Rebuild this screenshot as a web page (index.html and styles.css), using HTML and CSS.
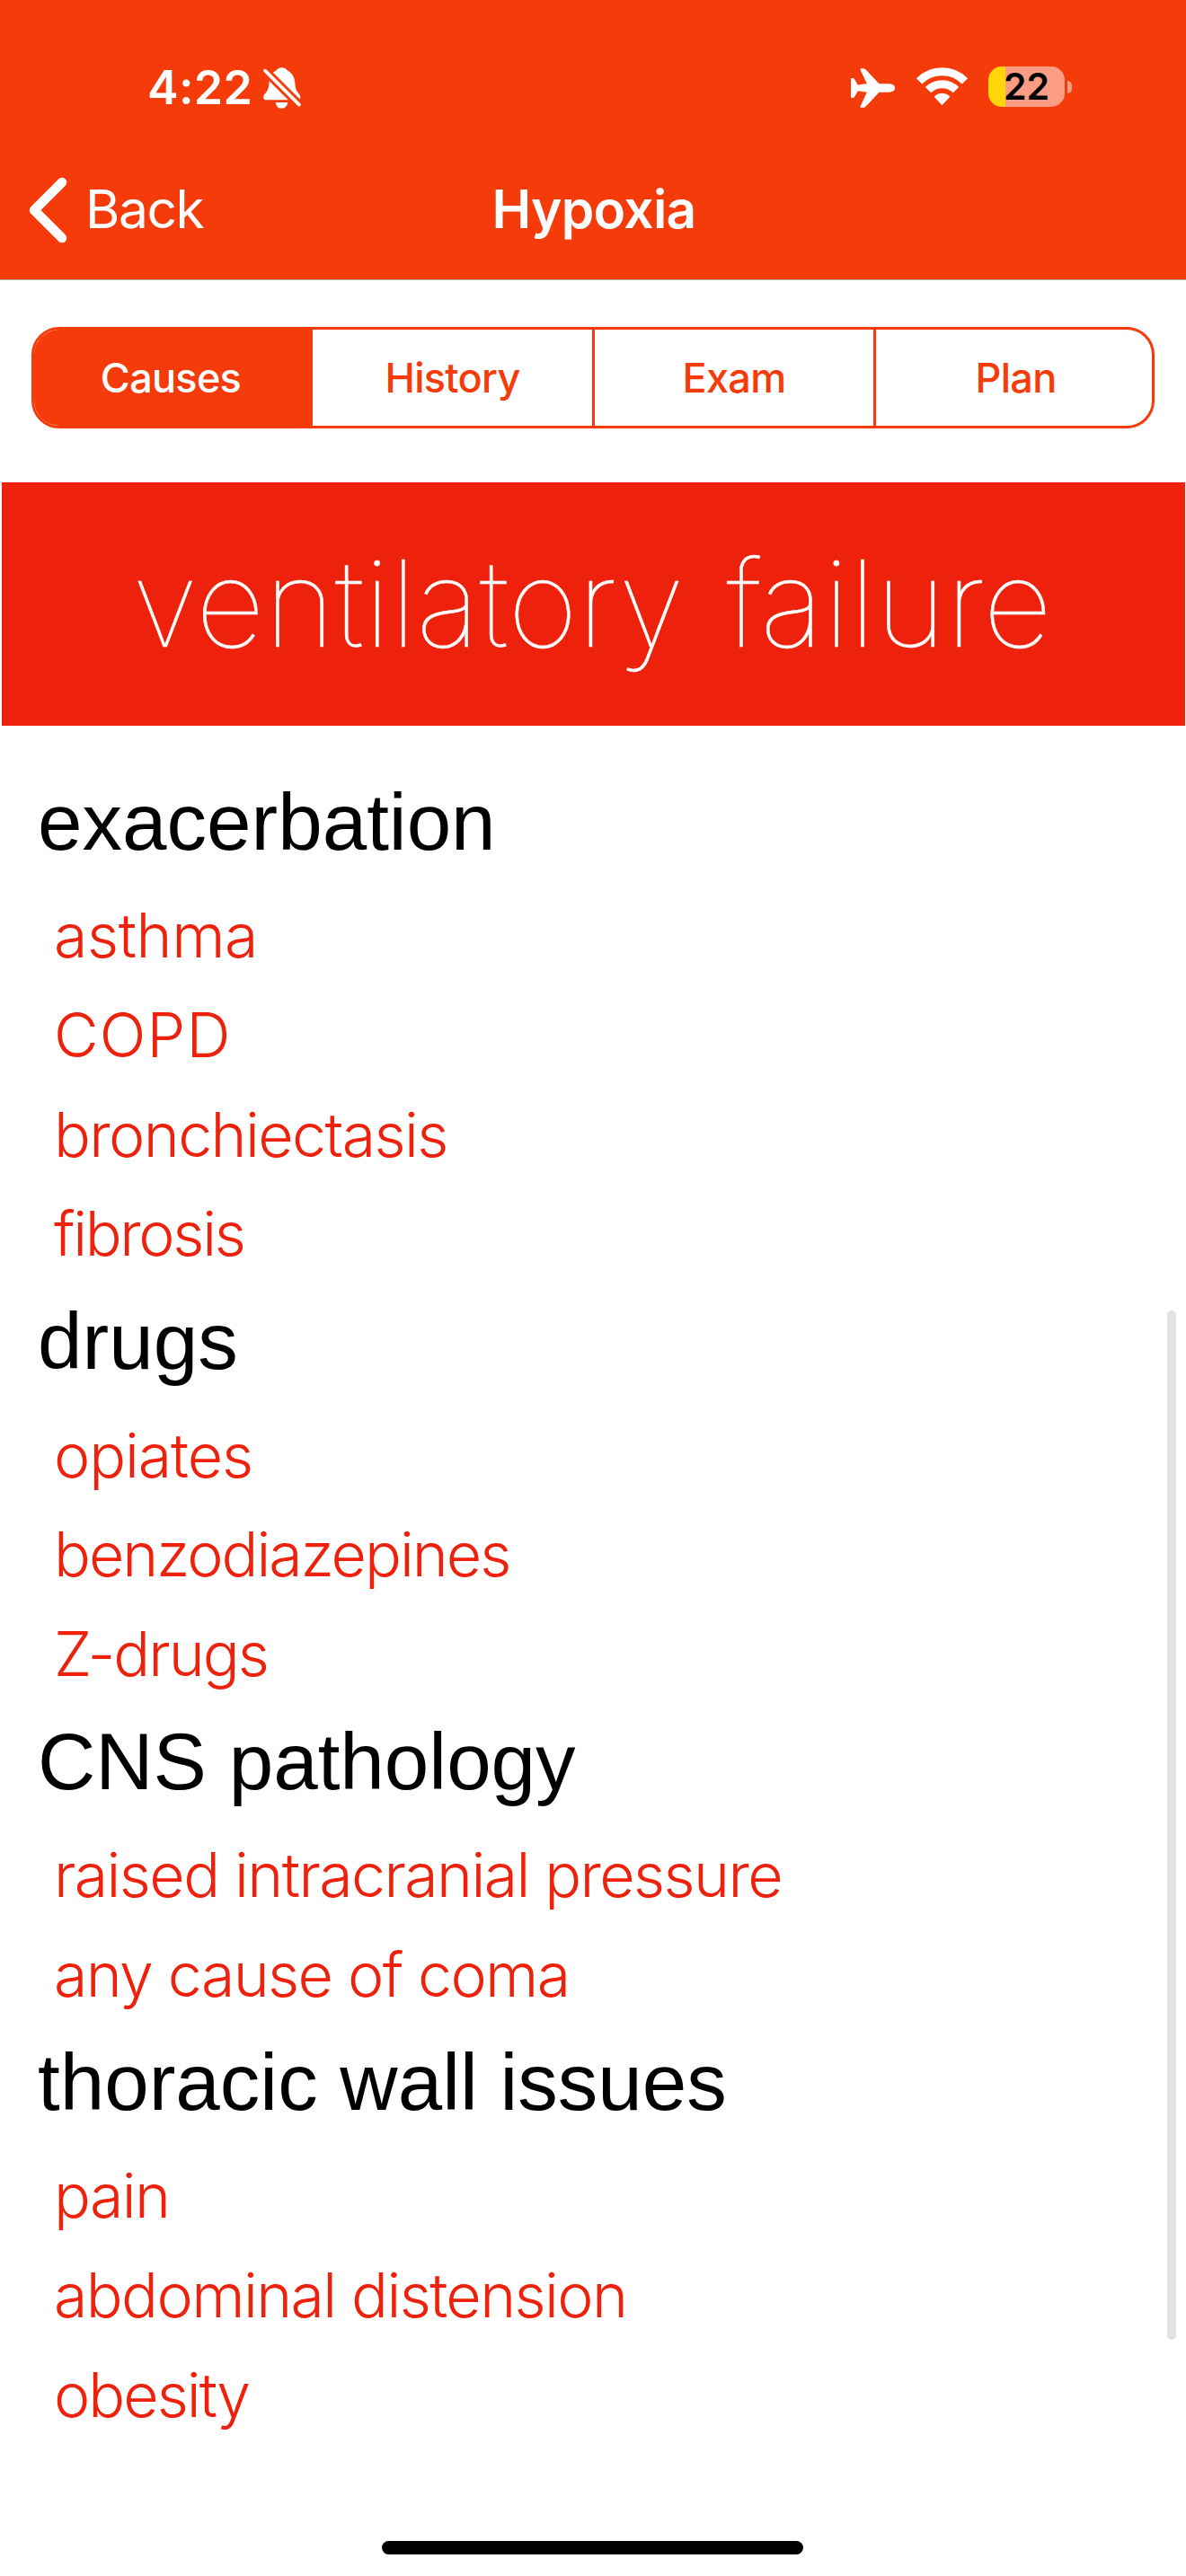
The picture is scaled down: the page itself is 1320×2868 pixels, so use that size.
FILE: index.html
```html
<!DOCTYPE html>
<html lang="en">
<head>
<meta charset="utf-8">
<title>Hypoxia</title>
<link rel="stylesheet" href="styles.css">
</head>
<body>
<div class="screen">
  <header class="header">
    <div class="status">
      <div class="status-left">
        <span class="time">4:22</span>
        <svg class="bell" viewBox="0 0 126 138">
          <mask id="cut"><rect width="126" height="138" fill="#fff"/><path d="M-20 -15L146 151" stroke="#000" stroke-width="29"/></mask>
          <g fill="#fff" mask="url(#cut)">
            <path d="M62 1C54 1 48 4 44 10C30 17 21 28 20 44C19 68 16 76 6 88C1 93 0 98 1 103C2 108 6 109 12 109H114C120 109 124 106 124 100C124 92 118 87 113 80C107 72 107 62 106 52C105 32 95 18 80 10C76 4 70 1 62 1Z"/>
          </g>
          <path d="M41 117H82C80 130 72 137 61 137C50 137 43 130 41 117Z" fill="#fff"/>
          <path d="M6 11L120 125" stroke="#fff" stroke-width="11" stroke-linecap="round"/>
        </svg>
      </div>
      <div class="status-right">
        <svg class="plane" viewBox="0 0 148 132"><path fill="#fff" d="M130 52H95L51 5Q47 0 42 0H34Q30 0 32 5L54 52Q38 53 24 56L12 36Q10 33 6 33H2Q0 33 0 36V96Q0 99 2 99H6Q10 99 12 96L24 76Q38 79 54 80L32 127Q30 132 34 132H42Q47 132 51 127L95 80H130Q148 78 148 66Q148 54 130 52Z"/></svg>
        <svg class="wifi" viewBox="0 0 172 127"><g fill="none" stroke="#fff" stroke-width="27"><path d="M9 46.3A108.5 108.5 0 0 1 163 46.3"/><path d="M39.3 76A65.5 65.5 0 0 1 132.700 76"/></g><path fill="#fff" d="M61.500 101Q59 98.500 61.500 96A37 37 0 0 1 110.500 96Q113 98.500 110.500 101L88 125.500Q86 127 84 125.500Z"/></svg>
        <div class="battery"><span class="battery-body">22</span><span class="battery-nub"></span></div>
      </div>
    </div>
    <nav class="nav">
      <a class="back">
        <svg class="chevron" viewBox="0 0 44 74"><path d="M38 6L7 37L38 68" fill="none" stroke="#fff" stroke-width="10.500" stroke-linecap="round" stroke-linejoin="round"/></svg>
        <span>Back</span>
      </a>
      <h1 class="nav-title">Hypoxia</h1>
      <span></span>
    </nav>
  </header>

  <div class="tabs">
    <div class="tab tab-active">Causes</div>
    <div class="tab">History</div>
    <div class="tab tab-divided">Exam</div>
    <div class="tab tab-divided tab-last">Plan</div>
  </div>

  <h2 class="banner">ventilatory failure</h2>

  <main class="list">
    <h3>exacerbation</h3>
    <ul>
      <li class="normal">asthma</li>
      <li class="wide">COPD</li>
      <li>bronchiectasis</li>
      <li class="tightest">fibrosis</li>
    </ul>
    <h3>drugs</h3>
    <ul>
      <li class="snug">opiates</li>
      <li class="tight">benzodiazepines</li>
      <li class="tight">Z-drugs</li>
    </ul>
    <h3>CNS pathology</h3>
    <ul>
      <li>raised intracranial pressure</li>
      <li>any cause of coma</li>
    </ul>
    <h3>thoracic wall issues</h3>
    <ul>
      <li>pain</li>
      <li>abdominal distension</li>
      <li class="tight">obesity</li>
    </ul>
  </main>

  <div class="scrollbar"></div>
  <div class="home-indicator"></div>
</div>
</body>
</html>
```
FILE: styles.css
```css
* { box-sizing: border-box; margin: 0; padding: 0; }
body { background: #fff; }
svg { display: block; overflow: visible; }

.screen {
  position: relative;
  width: 1320px;
  height: 2868px;
  overflow: hidden;
  background: #fff;
  font-family: Inter, "Liberation Sans", sans-serif;
}

/* Header */
.header {
  height: 312px;
  background: #f53b0a;
  border-bottom: 1px solid #b5b0ae;
  color: #fff;
}
.status {
  display: flex;
  justify-content: space-between;
  align-items: center;
  height: 195px;
  padding: 0 127px 0 164px;
}
.status-left, .status-right { display: flex; align-items: center; }
.time { font-size: 52px; font-weight: 600; line-height: 64px; letter-spacing: 0.3px; }
.bell { width: 42px; height: 46px; margin: 1px 0 0 12px; }
.plane { width: 49px; height: 44px; }
.wifi { width: 57px; height: 42px; margin: 0 23px 3px 24px; }
.battery { display: flex; align-items: center; gap: 3px; margin-bottom: 2px; }
.battery-body {
  width: 85px;
  height: 45px;
  padding-left: 17px;
  border-radius: 15px;
  background: linear-gradient(90deg, #ffd60a 19px, #fb9d84 19px);
  color: #000;
  font-size: 41px;
  font-weight: 600;
  line-height: 45px;
}
.battery-nub { width: 5px; height: 14px; border-radius: 0 6px 6px 0; background: #fb9d84; }

.nav {
  display: grid;
  grid-template-columns: 1fr auto 1fr;
  align-items: center;
  height: 77px;
}
.back {
  display: flex;
  align-items: center;
  gap: 20px;
  padding-left: 31px;
  font-size: 58.6px;
  line-height: 70px;
  letter-spacing: -1.4px;
}
.back span { padding-bottom: 2px; }
.chevron { width: 44px; height: 74px; }
.nav-title { padding: 0 0 2px 2px; font-size: 58.6px; font-weight: 600; line-height: 70px; letter-spacing: -0.7px; }

/* Segmented control */
.tabs {
  display: grid;
  grid-template-columns: 310px 311px 313px 310px;
  height: 113px;
  margin: 52px 35px 0;
  border: 3px solid #f53b0a;
  border-radius: 31px;
  overflow: hidden;
}
.tab {
  display: flex;
  align-items: center;
  justify-content: center;
  color: #f53b0a;
  font-size: 45px;
  font-weight: 500;
  letter-spacing: -0.7px;
}
.tab-active { padding-right: 6px; background: #f53b0a; color: #fff; }
.tab-divided { border-left: 3px solid #f53b0a; }
.tab-last { padding-left: 4px; }

/* Section banner */
.banner {
  height: 270.5px;
  margin: 60px 1.5px 0 2px;
  padding-right: 2px;
  background: #ee220c;
  color: #fff;
  font-size: 134px;
  font-weight: 100;
  line-height: 269px;
  letter-spacing: 0.1px;
  word-spacing: 9px;
  text-align: center;
  white-space: nowrap;
  -webkit-text-stroke: 0.5px #fff;
}

/* Causes */
.list { padding: 43px 0 0 42px; }
.list h3 {
  padding-bottom: 6.5px;
  color: #000;
  font: 400 89px/129px "Liberation Sans", sans-serif;
}
.list ul { padding-left: 18px; list-style: none; }
.list li {
  color: #ee220c;
  font-size: 68px;
  font-weight: 300;
  line-height: 110.75px;
  letter-spacing: -1.6px;
}
.list .wide { letter-spacing: 1.2px; }
.list .normal { letter-spacing: -0.4px; }
.list .snug { letter-spacing: -1.1px; }
.list .tight { letter-spacing: -2px; }
.list .tightest { letter-spacing: -2.3px; }

/* Overlays */
.scrollbar {
  position: absolute;
  top: 1459px;
  left: 1299px;
  width: 10px;
  height: 1146px;
  border-radius: 5px;
  background: #e3e3e3;
}
.home-indicator {
  position: absolute;
  top: 2829px;
  left: 425px;
  width: 469px;
  height: 15px;
  border-radius: 8px;
  background: #000;
}
```
